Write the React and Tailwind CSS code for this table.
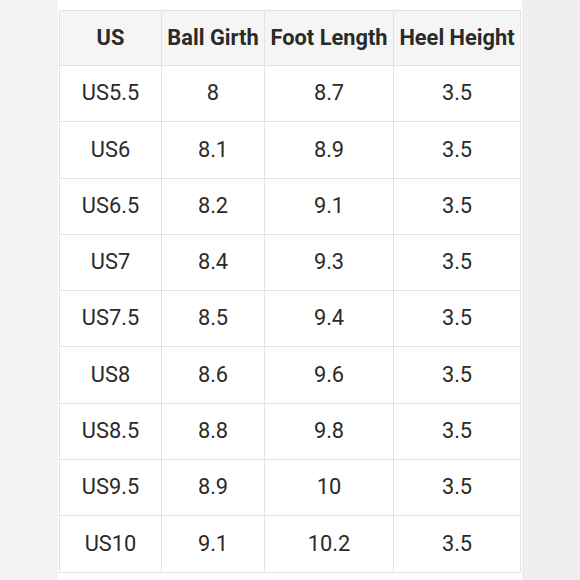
const rows = [
  ['US5.5', '8', '8.7', '3.5'],
  ['US6', '8.1', '8.9', '3.5'],
  ['US6.5', '8.2', '9.1', '3.5'],
  ['US7', '8.4', '9.3', '3.5'],
  ['US7.5', '8.5', '9.4', '3.5'],
  ['US8', '8.6', '9.6', '3.5'],
  ['US8.5', '8.8', '9.8', '3.5'],
  ['US9.5', '8.9', '10', '3.5'],
  ['US10', '9.1', '10.2', '3.5'],
];

const head = ['US', 'Ball Girth', 'Foot Length', 'Heel Height'];

export default function App() {
  return (
    <div className="w-[580px] h-[580px] flex bg-gradient-to-r from-[#f3f3f3] via-[#f1f1f1] to-[#eeeeee] font-['Roboto',sans-serif]">
      <div className="w-[58px]" />
      <div className="w-[464px] h-full bg-white pt-[10px] pl-px">
        <table className="border-collapse text-[21.8px] text-[#2a2a2a]">
          <colgroup>
            <col className="w-[102px]" />
            <col className="w-[103px]" />
            <col className="w-[129px]" />
            <col className="w-[127px]" />
          </colgroup>
          <thead>
            <tr className="h-[55px] bg-[#f5f5f5]">
              {head.map(h => (
                <th key={h} className="border border-[#e3e3e3] font-bold text-center p-0">{h}</th>
              ))}
            </tr>
          </thead>
          <tbody>
            {rows.map(r => (
              <tr key={r[0]} className="h-[56.3px]">
                {r.map((c, i) => (
                  <td key={i} className="border border-[#e3e3e3] text-center font-normal p-0">{c}</td>
                ))}
              </tr>
            ))}
          </tbody>
        </table>
      </div>
    </div>
  );
}
